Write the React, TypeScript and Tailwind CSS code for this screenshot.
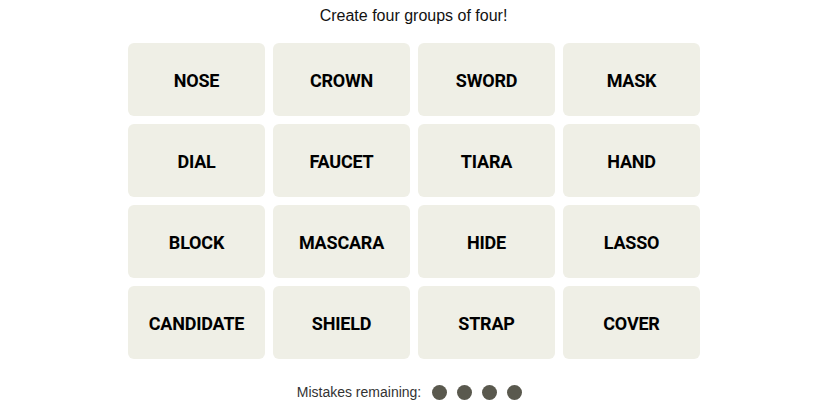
const words = [
  'NOSE', 'CROWN', 'SWORD', 'MASK',
  'DIAL', 'FAUCET', 'TIARA', 'HAND',
  'BLOCK', 'MASCARA', 'HIDE', 'LASSO',
  'CANDIDATE', 'SHIELD', 'STRAP', 'COVER',
];

const App = () => {
  return (
    <div className="min-h-screen bg-white flex flex-col items-center font-['Liberation_Sans',sans-serif] text-[#121212]">
      {/* Instrucciones */}
      <p className="pt-[4px] text-base leading-6 ml-[2px]">Create four groups of four!</p>

      {/* Tablero */}
      <div className="mt-[15px] ml-[3px] grid grid-cols-4 gap-x-2 gap-y-2">
        {words.map((w) => (
          <button
            key={w}
            className="w-[137px] h-[73px] pt-[3px] rounded-md bg-[#efefe6] flex items-center justify-center font-['Roboto',sans-serif] font-bold text-lg tracking-[-0.2px] text-black"
          >
            {w}
          </button>
        ))}
      </div>

      {/* Errores restantes */}
      <div className="mt-[21px] flex items-center gap-[11px] -ml-[6px]">
        <span className="text-[14px] leading-6 text-[#333]">Mistakes remaining:</span>
        <div className="flex items-center gap-[10px]">
          {[0, 1, 2, 3].map((i) => (
            <span key={i} className="w-[15px] h-[15px] rounded-full bg-[#5a594e]" />
          ))}
        </div>
      </div>
    </div>
  );
};

export default App;
